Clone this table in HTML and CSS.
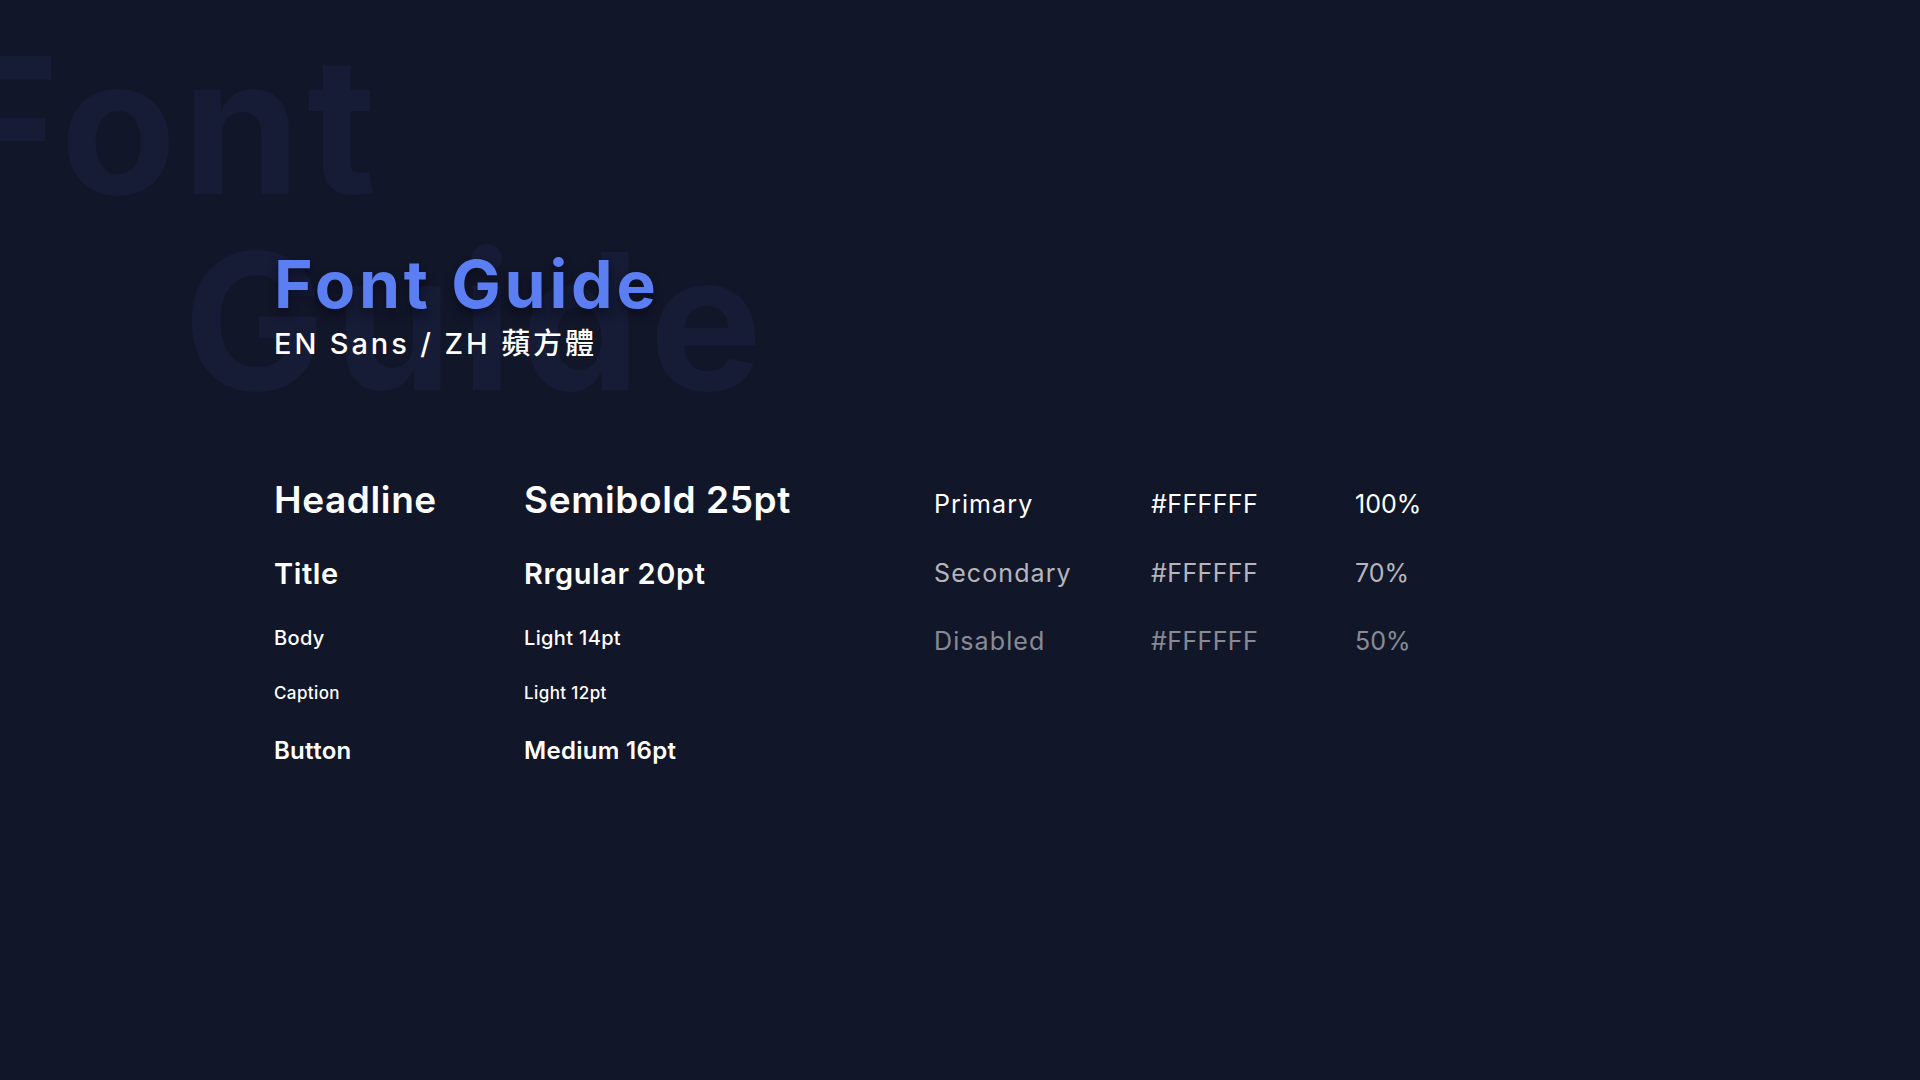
FILE: index.html
```html
<!DOCTYPE html>
<html lang="zh-Hant">
<head>
<meta charset="utf-8">
<title>Font Guide</title>
<link rel="stylesheet" href="styles.css">
</head>
<body>
<div class="page">
  <div class="bg-word bg-font" aria-hidden="true">Font</div>
  <div class="bg-word bg-guide" aria-hidden="true">Guide</div>

  <header class="heading">
    <h1 class="title">Font Guide</h1>
    <p class="subtitle">EN Sans / ZH 蘋方體</p>
  </header>

  <section class="tables">
    <div class="type-table">
      <div class="type-row row-headline"><span class="cell-name">Headline</span><span class="cell-spec">Semibold 25pt</span></div>
      <div class="type-row row-title"><span class="cell-name">Title</span><span class="cell-spec">Rrgular 20pt</span></div>
      <div class="type-row row-body"><span class="cell-name">Body</span><span class="cell-spec">Light 14pt</span></div>
      <div class="type-row row-caption"><span class="cell-name">Caption</span><span class="cell-spec">Light 12pt</span></div>
      <div class="type-row row-button"><span class="cell-name">Button</span><span class="cell-spec">Medium 16pt</span></div>
    </div>

    <div class="color-table">
      <div class="color-row primary"><span class="c-name">Primary</span><span class="c-hex">#FFFFFF</span><span class="c-pct">100%</span></div>
      <div class="color-row secondary"><span class="c-name">Secondary</span><span class="c-hex">#FFFFFF</span><span class="c-pct">70%</span></div>
      <div class="color-row disabled"><span class="c-name">Disabled</span><span class="c-hex">#FFFFFF</span><span class="c-pct">50%</span></div>
    </div>
  </section>
</div>
</body>
</html>
```
FILE: styles.css
```css
* { box-sizing: border-box; }

html, body {
  margin: 0;
  padding: 0;
  background: #121629;
}

body {
  font-family: Inter, "Noto Sans CJK TC", "Noto Sans", sans-serif;
  color: #ffffff;
}

.page {
  position: relative;
  width: 1920px;
  height: 1080px;
  overflow: hidden;
  background: #121629;
  padding: 251px 0 0 274px;
}

/* decorative background words */
.bg-word {
  position: absolute;
  font-family: Inter, sans-serif;
  font-weight: 700;
  font-size: 190px;
  line-height: 1;
  letter-spacing: 9px;
  color: #161b36;
  white-space: nowrap;
  pointer-events: none;
}
.bg-font { left: -52px; top: 30px; letter-spacing: 6px; }
.bg-guide { left: 183px; top: 226px; letter-spacing: 8.5px; }

.heading {
  position: relative;
  display: flex;
  flex-direction: column;
}

.title {
  margin: 0;
  font-size: 66px;
  line-height: 1;
  font-weight: 700;
  letter-spacing: 3.8px;
  color: #5b7ef2;
  text-shadow: 0 6px 10px rgba(5, 8, 20, 0.55);
}

.subtitle {
  margin: 12px 0 0;
  font-size: 29px;
  line-height: 1;
  font-weight: 500;
  letter-spacing: 2.9px;
  color: #ffffff;
}

.tables {
  position: relative;
  display: flex;
  margin-top: 122.5px;
}

.type-table {
  width: 659px;
  display: flex;
  flex-direction: column;
}

.type-row {
  display: grid;
  grid-template-columns: 250px 1fr;
  line-height: 1;
  color: #ffffff;
}

.row-headline { font-size: 37px; font-weight: 600; letter-spacing: 0.6px; }
.row-title    { font-size: 29px; font-weight: 600; letter-spacing: 0.6px; margin-top: 41px; }
.row-body     { font-size: 20px; font-weight: 500; letter-spacing: 0.35px; margin-top: 40px; }
.row-caption  { font-size: 17px; font-weight: 500; letter-spacing: 0.4px; margin-top: 37px; }
.row-button   { font-size: 24px; font-weight: 600; letter-spacing: 0.3px; margin-top: 37.5px; }

.color-table {
  margin-top: 11.5px;
  margin-left: 1px;
  display: flex;
  flex-direction: column;
  gap: 43.5px;
}

.color-row {
  display: grid;
  grid-template-columns: 217px 204px auto;
  font-size: 25px;
  line-height: 1;
  font-weight: 400;
}

.c-name { letter-spacing: 1.1px; }
.c-hex  { letter-spacing: 0.4px; }
.c-pct  { letter-spacing: 0; }

.primary   { color: #ffffff; }
.secondary { color: rgba(255, 255, 255, 0.7); }
.disabled  { color: rgba(255, 255, 255, 0.5); }
```
